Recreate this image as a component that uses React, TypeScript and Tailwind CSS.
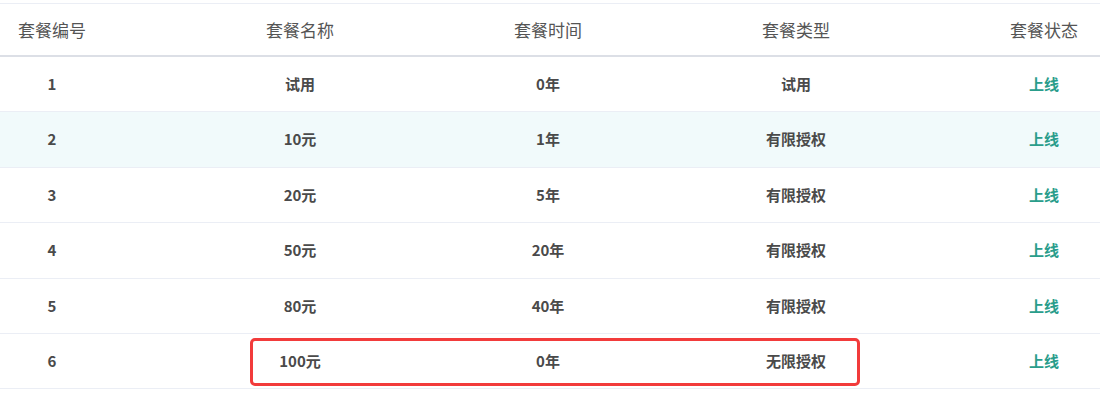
const rows = [
  { id: 1, name: "试用", time: "0年", type: "试用" },
  { id: 2, name: "10元", time: "1年", type: "有限授权" },
  { id: 3, name: "20元", time: "5年", type: "有限授权" },
  { id: 4, name: "50元", time: "20年", type: "有限授权" },
  { id: 5, name: "80元", time: "40年", type: "有限授权" },
  { id: 6, name: "100元", time: "0年", type: "无限授权" },
];

export default function App() {
  return (
    <div
      className="relative w-[1100px] h-[396px] overflow-hidden bg-white pt-[3px]"
      style={{ fontFamily: '"Microsoft YaHei", "Noto Sans CJK SC", "Noto Sans", sans-serif' }}
    >
      <div className="-ml-[72px] w-[1240px] border-t border-[#ebeef5]">
        <div className="grid grid-cols-5 h-[53px] items-center border-b-2 border-[#dcdfe6] text-[17px] text-[#555]">
          <div className="text-center">套餐编号</div>
          <div className="text-center">套餐名称</div>
          <div className="text-center">套餐时间</div>
          <div className="text-center">套餐类型</div>
          <div className="text-center">套餐状态</div>
        </div>
        {rows.map((r) => (
          <div
            key={r.id}
            className={
              "grid grid-cols-5 h-[55.4px] items-center border-b border-[#ebeef5] text-[15px] font-bold text-[#4a4a4a] " +
              (r.id === 2 ? "bg-[#f1fafb]" : "bg-white")
            }
          >
            <div className="text-center">{r.id}</div>
            <div className="text-center">{r.name}</div>
            <div className="text-center">{r.time}</div>
            <div className="text-center">{r.type}</div>
            <div className="text-center text-[#2a9d8b]">上线</div>
          </div>
        ))}
      </div>
      {/* annotation box */}
      <div className="absolute left-[250px] top-[338px] w-[610px] h-[48px] rounded-[5px] border-[3px] border-[#f23b3b]" />
    </div>
  );
}
